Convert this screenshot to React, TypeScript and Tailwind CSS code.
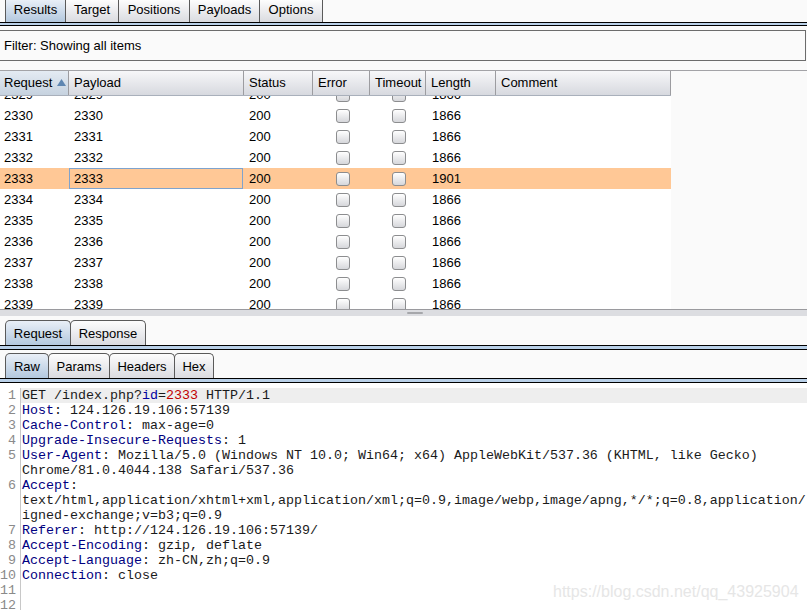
import React from 'react';

type TabDef = { label: string; w: string; sel?: boolean };

function Tab({ label, w, sel, top }: TabDef & { top?: boolean }) {
  return (
    <div
      className={`${w} h-full -ml-px first:ml-0 flex items-center justify-center border border-b-0 border-[#5a5a5a] ${
        top ? 'border-t-0 pb-[3px]' : 'rounded-t-[5px]'
      } ${
        sel
          ? 'bg-linear-to-b from-[#e9eff7] to-[#b3c8de]'
          : 'bg-linear-to-b from-[#fdfdfd] to-[#dadbe0]'
      } text-black`}
    >
      {label}
    </div>
  );
}

function Band() {
  return <div className="h-[5px] border-y border-black bg-[#b9d0e8]" />;
}

function Checkbox() {
  return (
    <div className="w-[14px] h-[14px] rounded-[3px] border border-[#8c8d8f] bg-linear-to-b from-white to-[#d6d7db]" />
  );
}

const rows = [2329, 2330, 2331, 2332, 2333, 2334, 2335, 2336, 2337, 2338, 2339];

function Row({ n }: { n: number }) {
  const hl = n === 2333;
  return (
    <div className={`flex h-[21px] w-[671px] ${hl ? 'bg-[#ffc896]' : 'bg-white'}`}>
      <div className="w-[69px] pl-[4px] flex items-center">{n}</div>
      <div className="w-[175px] flex items-center">
        {hl ? (
          <div className="w-[174px] h-[21px] border border-[#7fa3cd] pl-[4px] flex items-center">{n}</div>
        ) : (
          <div className="pl-[5px]">{n}</div>
        )}
      </div>
      <div className="w-[69px] pl-[5px] flex items-center">200</div>
      <div className="w-[57px] flex items-center justify-center pl-[2px]">
        <Checkbox />
      </div>
      <div className="w-[56px] flex items-center justify-center pl-[2px]">
        <Checkbox />
      </div>
      <div className="w-[70px] pl-[6px] flex items-center">{hl ? 1901 : 1866}</div>
      <div className="w-[175px]" />
    </div>
  );
}

const headers = [
  { name: 'Request', w: 'w-[69px]' },
  { name: 'Payload', w: 'w-[175px]' },
  { name: 'Status', w: 'w-[69px]' },
  { name: 'Error', w: 'w-[57px]' },
  { name: 'Timeout', w: 'w-[56px]' },
  { name: 'Length', w: 'w-[70px]' },
  { name: 'Comment', w: 'w-[175px]' },
];

type Seg = { t: string; c?: string };
type Line = { num?: number; segs: Seg[]; hl?: boolean };

const N = 'text-[#000080]';
const lines: Line[] = [
  {
    num: 1,
    hl: true,
    segs: [
      { t: 'GET /index.php?' },
      { t: 'id', c: 'text-[#0000a0]' },
      { t: '=' },
      { t: '2333', c: 'text-[#c00000]' },
      { t: ' HTTP/1.1' },
    ],
  },
  { num: 2, segs: [{ t: 'Host', c: N }, { t: ': 124.126.19.106:57139' }] },
  { num: 3, segs: [{ t: 'Cache-Control', c: N }, { t: ': max-age=0' }] },
  { num: 4, segs: [{ t: 'Upgrade-Insecure-Requests', c: N }, { t: ': 1' }] },
  {
    num: 5,
    segs: [
      { t: 'User-Agent', c: N },
      { t: ': Mozilla/5.0 (Windows NT 10.0; Win64; x64) AppleWebKit/537.36 (KHTML, like Gecko)' },
    ],
  },
  { segs: [{ t: 'Chrome/81.0.4044.138 Safari/537.36' }] },
  { num: 6, segs: [{ t: 'Accept', c: N }, { t: ':' }] },
  {
    segs: [
      {
        t: 'text/html,application/xhtml+xml,application/xml;q=0.9,image/webp,image/apng,*/*;q=0.8,application/',
      },
    ],
  },
  { segs: [{ t: 'igned-exchange;v=b3;q=0.9' }] },
  { num: 7, segs: [{ t: 'Referer', c: N }, { t: ': http://124.126.19.106:57139/' }] },
  { num: 8, segs: [{ t: 'Accept-Encoding', c: N }, { t: ': gzip, deflate' }] },
  { num: 9, segs: [{ t: 'Accept-Language', c: N }, { t: ': zh-CN,zh;q=0.9' }] },
  { num: 10, segs: [{ t: 'Connection', c: N }, { t: ': close' }] },
  { num: 11, segs: [] },
  { num: 12, segs: [] },
];

export default function App() {
  return (
    <div className="relative w-[807px] h-[610px] overflow-hidden bg-[#fafafa] font-['Liberation_Sans',Arial,sans-serif] text-[13px] text-black leading-none">
      {/* top tabs */}
      <div className="h-[22px] flex pl-[5px]">
        <Tab top label="Results" w="w-[61px]" sel />
        <Tab top label="Target" w="w-[54px]" />
        <Tab top label="Positions" w="w-[72px]" />
        <Tab top label="Payloads" w="w-[71px]" />
        <Tab top label="Options" w="w-[64px]" />
      </div>
      <div className="h-[4px] border-y border-black bg-[#b9d0e8]" />
      <div className="h-[4px]" />
      {/* filter */}
      <div className="h-[31px] w-[806px] border-y border-r border-[#6c6c6c] flex items-center pl-[4px]">
        Filter: Showing all items
      </div>
      <div className="h-[9px]" />
      {/* table */}
      <div className="border-t border-[#a3a3a7]">
        <div className="flex h-[25px] w-[671px] border-b border-[#a9b0bb]">
          {headers.map((h, i) => (
            <div
              key={h.name}
              className={`${h.w} h-full flex items-center pb-[2px] border-r border-[#9c9ca0] ${
                i === 0
                  ? 'pl-[4px] bg-linear-to-b from-[#e4ebf3] to-[#c6d2df]'
                  : 'pl-[5px] bg-linear-to-b from-[#f7f7f9] to-[#d7d9df]'
              }`}
            >
              {h.name}
              {i === 0 && (
                <svg width="9" height="7" viewBox="0 0 9 7" className="ml-[5px]">
                  <path d="M4.5 0 L9 7 L0 7 Z" fill="#5e86b1" />
                </svg>
              )}
            </div>
          ))}
        </div>
        <div className="h-[213px] overflow-hidden">
          <div className="-mt-[12px]">
            {rows.map((n) => (
              <Row key={n} n={n} />
            ))}
          </div>
        </div>
      </div>
      {/* divider */}
      <div className="relative h-[7px] border-t border-[#9a9a9e] bg-[#dcdde1]">
        <div className="absolute left-[407px] top-[2px] w-[16px] h-[2px] bg-[#a6a7ab] rounded-[1px]" />
      </div>
      <div className="h-[4px]" />
      {/* request/response tabs */}
      <div className="h-[25px] flex pl-[5px]">
        <Tab label="Request" w="w-[66px]" sel />
        <Tab label="Response" w="w-[76px]" />
      </div>
      <Band />
      <div className="h-[3px]" />
      <div className="h-[25px] flex pl-[5px]">
        <Tab label="Raw" w="w-[44px]" sel />
        <Tab label="Params" w="w-[62px]" />
        <Tab label="Headers" w="w-[66px]" />
        <Tab label="Hex" w="w-[40px]" />
      </div>
      <Band />
      {/* editor */}
      <div className="bg-white h-[300px] pt-[5px] font-['Liberation_Mono','Courier_New',monospace] text-[13.33px] leading-[15px] text-[#1a1a1a]">
        {lines.map((l, i) => (
          <div key={i} className={`flex h-[15px] ${l.hl ? 'bg-[#eeeeee]' : ''}`}>
            <div className="w-[21px] shrink-0 border-r border-[#c8c8c8] bg-white text-right pr-[4px] text-[#8a8a8a]">
              {l.num ?? ''}
            </div>
            <div className="pl-[1px] whitespace-pre">
              {l.segs.map((s, j) => (
                <span key={j} className={s.c}>
                  {s.t}
                </span>
              ))}
            </div>
          </div>
        ))}
      </div>
      {/* watermark */}
      <div className="absolute left-[553px] top-[584px] text-[16px] text-[#e6e6e6] font-['Liberation_Sans',Arial,sans-serif]">
        https://blog.csdn.net/qq_43925904
      </div>
    </div>
  );
}
